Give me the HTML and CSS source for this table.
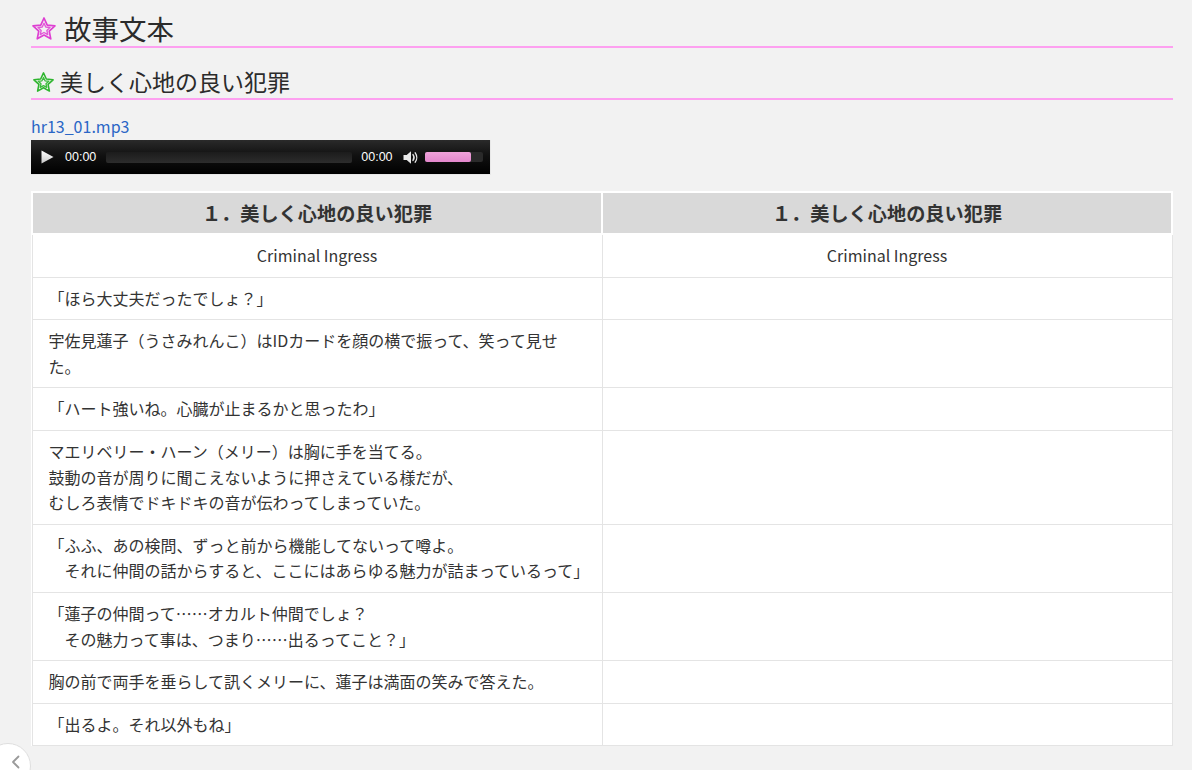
FILE: index.html
```html
<!DOCTYPE html>
<html lang="ja">
<head>
<meta charset="utf-8">
<title>故事文本</title>
<link rel="stylesheet" href="styles.css">
</head>
<body>
<main class="page">
  <h1 class="title">
    <svg class="star star-pink" width="24" height="24" viewBox="0 0 24 24">
      <polygon points="12,1 15.23,8.05 22.94,8.95 17.23,14.2 18.76,21.8 12,18 5.24,21.8 6.77,14.2 1.06,8.95 8.77,8.05" fill="none" stroke="#de3fd2" stroke-width="1.7" stroke-linejoin="round"/>
      <polygon points="12,6.2 13.76,10.07 17.99,10.55 14.85,13.43 15.7,17.6 12,15.5 8.3,17.6 9.15,13.43 6.01,10.55 10.24,10.07" fill="none" stroke="#e25ad8" stroke-width="1.4" stroke-linejoin="round"/>
    </svg>
    <span>故事文本</span>
  </h1>
  <h2 class="subtitle">
    <svg class="star star-green" width="21" height="21" viewBox="0 0 24 24">
      <polygon points="12,1 15.23,8.05 22.94,8.95 17.23,14.2 18.76,21.8 12,18 5.24,21.8 6.77,14.2 1.06,8.95 8.77,8.05" fill="none" stroke="#2fb52f" stroke-width="1.8" stroke-linejoin="round"/>
      <polygon points="12,6.2 13.76,10.07 17.99,10.55 14.85,13.43 15.7,17.6 12,15.5 8.3,17.6 9.15,13.43 6.01,10.55 10.24,10.07" fill="none" stroke="#3cbc3c" stroke-width="1.5" stroke-linejoin="round"/>
    </svg>
    <span>美しく心地の良い犯罪</span>
  </h2>

  <a class="file-link" href="#">hr13_01.mp3</a>

  <div class="player">
    <svg class="play" width="13" height="14" viewBox="0 0 13 14">
      <defs>
        <linearGradient id="pg" x1="0" y1="0" x2="0" y2="1">
          <stop offset="0" stop-color="#ffffff"/>
          <stop offset="1" stop-color="#c8c8c8"/>
        </linearGradient>
      </defs>
      <polygon points="0.5,0.5 12.5,7 0.5,13.5" fill="url(#pg)"/>
    </svg>
    <span class="time">00:00</span>
    <div class="rail"></div>
    <span class="time">00:00</span>
    <svg class="speaker" width="17" height="17" viewBox="0 0 17 17">
      <path d="M1.5 6h3.2l4.3-3.8v12.6L4.7 11H1.5z" fill="#e8e8e8"/>
      <path d="M11 5.6c1.2 1.6 1.2 4.2 0 5.8" fill="none" stroke="#e8e8e8" stroke-width="1.4" stroke-linecap="round"/>
      <path d="M13.2 3.8c2 2.7 2 6.7 0 9.4" fill="none" stroke="#e8e8e8" stroke-width="1.4" stroke-linecap="round"/>
    </svg>
    <div class="volume"><div class="volume-fill"></div></div>
  </div>

  <table class="story">
    <thead>
      <tr>
        <th>１．美しく心地の良い犯罪</th>
        <th>１．美しく心地の良い犯罪</th>
      </tr>
    </thead>
    <tbody>
      <tr>
        <td class="center">Criminal Ingress</td>
        <td class="center">Criminal Ingress</td>
      </tr>
      <tr>
        <td>「ほら大丈夫だったでしょ？」</td>
        <td></td>
      </tr>
      <tr>
        <td>宇佐見蓮子（うさみれんこ）はIDカードを顔の横で振って、笑って見せた。</td>
        <td></td>
      </tr>
      <tr>
        <td>「ハート強いね。心臓が止まるかと思ったわ」</td>
        <td></td>
      </tr>
      <tr>
        <td>マエリベリー・ハーン（メリー）は胸に手を当てる。<br>鼓動の音が周りに聞こえないように押さえている様だが、<br>むしろ表情でドキドキの音が伝わってしまっていた。</td>
        <td></td>
      </tr>
      <tr>
        <td>「ふふ、あの検問、ずっと前から機能してないって噂よ。<br>　それに仲間の話からすると、ここにはあらゆる魅力が詰まっているって」</td>
        <td></td>
      </tr>
      <tr>
        <td>「蓮子の仲間って……オカルト仲間でしょ？<br>　その魅力って事は、つまり……出るってこと？」</td>
        <td></td>
      </tr>
      <tr>
        <td>胸の前で両手を垂らして訊くメリーに、蓮子は満面の笑みで答えた。</td>
        <td></td>
      </tr>
      <tr>
        <td>「出るよ。それ以外もね」</td>
        <td></td>
      </tr>
    </tbody>
  </table>
</main>

<button class="back-btn" type="button" aria-label="back">
  <svg width="12" height="14" viewBox="0 0 12 14">
    <path d="M8.5 1.5L3 7l5.5 5.5" fill="none" stroke="#9a9a9a" stroke-width="1.8" stroke-linecap="round" stroke-linejoin="round"/>
  </svg>
</button>
</body>
</html>
```

FILE: styles.css
```css
* {
  box-sizing: border-box;
}

html, body {
  margin: 0;
  padding: 0;
}

body {
  background: #f2f2f2;
  color: #333;
  font-family: "Noto Sans CJK JP", "Noto Sans", sans-serif;
  font-size: 16px;
  height: 770px;
  overflow: hidden;
}

.page {
  width: 1142px;
  margin-left: 31px;
  display: flex;
  flex-direction: column;
  align-items: flex-start;
}

.title {
  align-self: stretch;
  margin: 11px 0 0;
  font-size: 27.5px;
  font-weight: 400;
  line-height: 35px;
  color: #2b2b2b;
  border-bottom: 2px solid #fda0f0;
  display: flex;
  align-items: center;
}

.title .star {
  margin: 1px 8px 0 1px;
  flex: none;
}

.subtitle {
  align-self: stretch;
  margin: 17px 0 0;
  font-size: 23px;
  font-weight: 400;
  line-height: 33px;
  color: #2b2b2b;
  border-bottom: 2px solid #fda0f0;
  display: flex;
  align-items: center;
}

.subtitle .star {
  margin: 2px 6px 0 2px;
  flex: none;
}

.file-link {
  margin-top: 16px;
  font-size: 16px;
  line-height: 20px;
  color: #2a66c6;
  text-decoration: none;
}

.player {
  margin-top: 4px;
  width: 460px;
  height: 35px;
  background: linear-gradient(#2a2a2a 0%, #111 45%, #000 100%);
  border-bottom: 1px solid #e8e8e8;
  border-right: 1px solid #e8e8e8;
  display: flex;
  align-items: center;
  padding-left: 10px;
  font-family: "Liberation Sans", Arial, sans-serif;
}

.player .play {
  flex: none;
  margin-top: -1px;
}

.player .time {
  color: #fff;
  font-size: 12.5px;
  line-height: 14px;
  margin-left: 11px;
}

.player .time + .rail {
  margin-left: 10px;
}

.rail {
  width: 246px;
  height: 11px;
  border-radius: 2px;
  background: linear-gradient(#1c1c1c, #2c2c2c);
  margin-right: -2px;
}

.speaker {
  margin-left: 9px;
  flex: none;
}

.volume {
  margin-left: 6px;
  width: 58px;
  height: 10px;
  border-radius: 2px;
  background: #2a2a2a;
  display: flex;
}

.volume-fill {
  width: 46px;
  height: 100%;
  border-radius: 2px;
  background: linear-gradient(#f0a2da, #e387cc);
}

.story {
  margin-top: 16px;
  width: 1142px;
  border-collapse: collapse;
  table-layout: fixed;
  background: #fff;
}

.story th {
  background: #d9d9d9;
  border: 2px solid #fff;
  font-size: 19.2px;
  font-weight: 700;
  line-height: 24px;
  padding: 8px 10px;
  color: #333;
  text-align: center;
}

.story td {
  border: 1px solid #e4e4e4;
  padding: 8px 16px;
  font-size: 16px;
  line-height: 25.6px;
  color: #333;
  vertical-align: top;
}

.story td.center {
  text-align: center;
}

.back-btn {
  position: fixed;
  left: -15px;
  top: 743px;
  width: 46px;
  height: 46px;
  border-radius: 50%;
  background: #fff;
  border: 1px solid #dedede;
  padding: 0;
  margin: 0;
}

.back-btn svg {
  position: absolute;
  left: 24px;
  top: 11px;
}
```
